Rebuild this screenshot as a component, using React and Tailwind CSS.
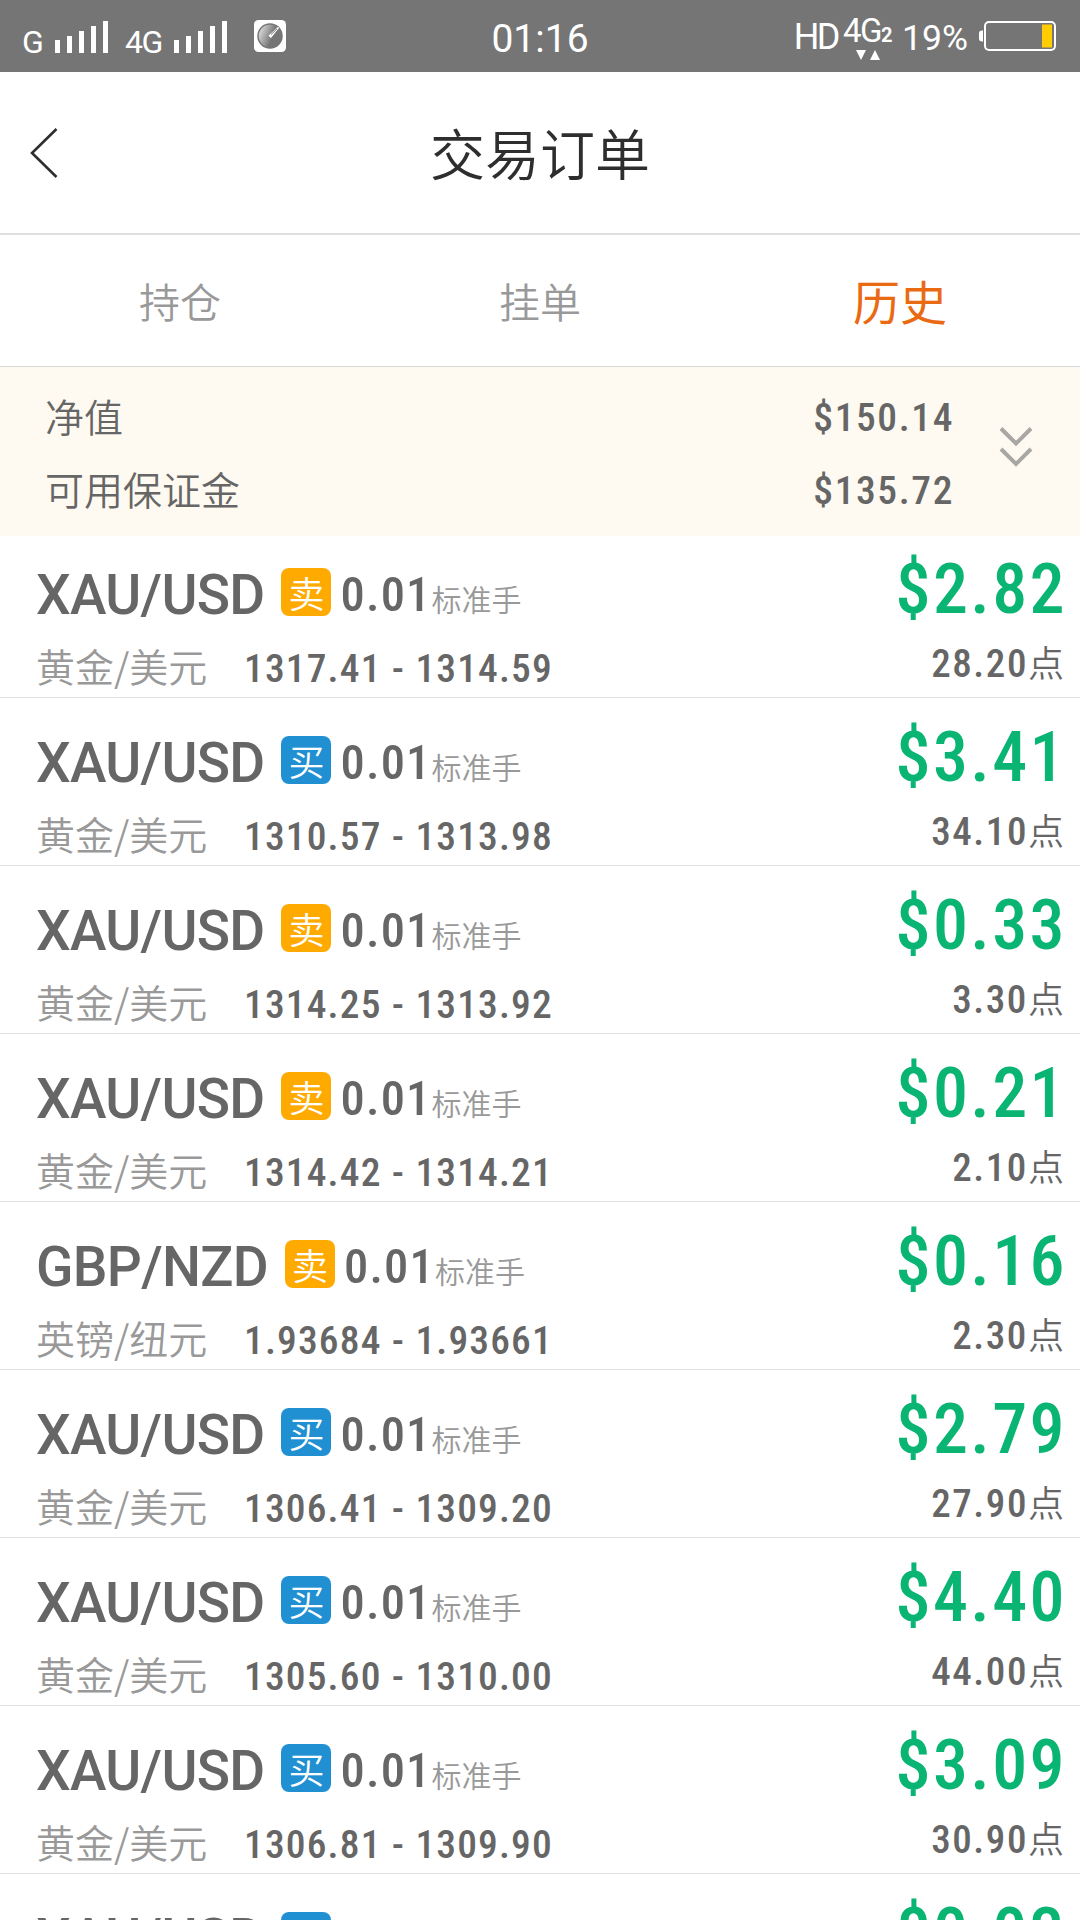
const NUM = "font-['Roboto_Condensed','Noto_Sans_CJK_SC',sans-serif] font-medium";

const orders = [
  { symbol: "XAU/USD", name: "黄金/美元", side: "sell", from: "1317.41", to: "1314.59", profit: "$2.82", points: "28.20" },
  { symbol: "XAU/USD", name: "黄金/美元", side: "buy", from: "1310.57", to: "1313.98", profit: "$3.41", points: "34.10" },
  { symbol: "XAU/USD", name: "黄金/美元", side: "sell", from: "1314.25", to: "1313.92", profit: "$0.33", points: "3.30" },
  { symbol: "XAU/USD", name: "黄金/美元", side: "sell", from: "1314.42", to: "1314.21", profit: "$0.21", points: "2.10" },
  { symbol: "GBP/NZD", name: "英镑/纽元", side: "sell", from: "1.93684", to: "1.93661", profit: "$0.16", points: "2.30" },
  { symbol: "XAU/USD", name: "黄金/美元", side: "buy", from: "1306.41", to: "1309.20", profit: "$2.79", points: "27.90" },
  { symbol: "XAU/USD", name: "黄金/美元", side: "buy", from: "1305.60", to: "1310.00", profit: "$4.40", points: "44.00" },
  { symbol: "XAU/USD", name: "黄金/美元", side: "buy", from: "1306.81", to: "1309.90", profit: "$3.09", points: "30.90" },
  { symbol: "XAU/USD", name: "黄金/美元", side: "buy", from: "1306.40", to: "1306.43", profit: "$0.03", points: "0.30" },
];

const tabs = [
  { label: "持仓", active: false },
  { label: "挂单", active: false },
  { label: "历史", active: true },
];

function SignalBars() {
  return (
    <div className="flex items-end gap-[7px]">
      <span className="h-[13px] w-[5px] bg-white" />
      <span className="h-[17px] w-[5px] bg-white" />
      <span className="h-[22px] w-[5px] bg-white" />
      <span className="h-[27px] w-[5px] bg-white" />
      <span className="h-[32px] w-[5px] bg-white" />
    </div>
  );
}

function GaugeIcon() {
  return (
    <svg width="32" height="32" viewBox="0 0 32 32">
      <defs>
        <linearGradient id="dial" x1="0" y1="0.3" x2="1" y2="0.7">
          <stop offset="0" stopColor="#e0e0e0" />
          <stop offset="0.6" stopColor="#757575" />
        </linearGradient>
      </defs>
      <rect width="32" height="32" rx="4.5" fill="#fff" />
      <circle cx="16" cy="16" r="12" fill="url(#dial)" stroke="#757575" strokeWidth="1.5" />
      <path d="M13.8 15.6 L24 6.4 L25.6 7.8 L17 18.6 Z" fill="#fff" stroke="#757575" strokeWidth="0.8" />
      <path d="M17 14.6 L23 8.8" stroke="#757575" strokeWidth="1" />
    </svg>
  );
}

function StatusBar() {
  return (
    <div className="flex h-[72px] items-start justify-between bg-[#757575] font-['Roboto',sans-serif] font-normal text-white">
      <div className="flex h-[53px] w-[420px] items-end pl-[22px]">
        <span className="w-[33px] text-[32px] leading-[22px]">G</span>
        <SignalBars />
        <span className="ml-[17px] w-[49px] text-[32px] leading-[22px] tracking-[-1.5px]">4G</span>
        <SignalBars />
        <span className="mb-px ml-[27px]"><GaugeIcon /></span>
      </div>
      <span className="w-[120px] pt-5 text-center text-[39px] leading-[39px]">01:16</span>
      <div className="flex h-[72px] w-[420px] items-start justify-end pr-6">
        <span className="mt-[19px] text-[36px] leading-9 tracking-[-2.5px]">HD</span>
        <div className="ml-[5px] flex w-[55px] flex-col pt-4">
          <div className="flex items-baseline">
            <span className="text-[33px] leading-[30px] tracking-[-1.5px]">4G</span>
            <span className="text-[20px] leading-[30px] font-bold">2</span>
          </div>
          <svg className="-mt-px ml-[13px]" width="24" height="11" viewBox="0 0 24 11" fill="#fff">
            <path d="M0 1h10L5 11z" />
            <path d="M14 11h10L19 1z" />
          </svg>
        </div>
        <span className="ml-1 mt-5 w-[77px] text-[35.5px] leading-9">19%</span>
        <svg className="mt-[21px]" width="77" height="30" viewBox="0 0 77 30">
          <path d="M4 9.5h-1a3 3 0 0 0-3 3v5a3 3 0 0 0 3 3h1z" fill="#fff" />
          <rect x="6" y="1" width="70" height="28" rx="4" fill="none" stroke="#fff" strokeWidth="2" />
          <rect x="63" y="3.5" width="10" height="23" fill="#fc0" />
        </svg>
      </div>
    </div>
  );
}

function Header() {
  return (
    <header className="grid h-[163px] grid-cols-[200px_1fr_200px] items-center border-b-2 border-[#dedede]">
      <svg className="ml-[30px]" width="28" height="50" viewBox="0 0 28 50" fill="none" stroke="#2e2e2e" strokeWidth="2.6">
        <path d="M26.5 1 L2 25 L26.5 49" />
      </svg>
      <h1 className="-mt-0.5 text-center text-[55px] text-[#2e2e2e]">交易订单</h1>
    </header>
  );
}

function Tabs() {
  return (
    <nav className="grid h-[132px] grid-cols-3 items-center border-b border-[#d8d8d8] text-center">
      {tabs.map((tab) => (
        <span key={tab.label} className={tab.active ? "text-[47px] font-normal text-[#ea6a14]" : "text-[41px] text-[#999]"}>
          {tab.label}
        </span>
      ))}
    </nav>
  );
}

function Summary() {
  return (
    <section className="flex h-[169px] bg-[#fffaf1] pl-[45px] pr-[47px] text-[#666]">
      <div className="flex-1 pt-3 text-[39px] leading-[73px]">
        <p>净值</p>
        <p>可用保证金</p>
      </div>
      <div className={`${NUM} pt-[14px] text-right text-[39.5px] leading-[73px] tracking-[1.6px]`}>
        <p>$150.14</p>
        <p>$135.72</p>
      </div>
      <svg className="ml-[45px] mt-[59px]" width="34" height="42" viewBox="0 0 34 42" fill="none" stroke="#a9a7a3" strokeWidth="4">
        <path d="M2 2.5 L17 17.5 L32 2.5" />
        <path d="M2 23 L17 38 L32 23" />
      </svg>
    </section>
  );
}

function OrderRow({ order }) {
  const sell = order.side === "sell";
  return (
    <li className="flex h-[168px] shrink-0 justify-between border-b border-[#e2e2e2] pl-9 pr-4">
      <div>
        <div className="flex h-[107px] items-start pt-[25px]">
          <span className="font-['Roboto',sans-serif] text-[55px] leading-[80px] font-medium tracking-[-0.7px] text-[#666]">{order.symbol}</span>
          <span className={`ml-[17px] mt-[13px] flex h-12 w-[50px] items-center justify-center rounded-lg text-[36px] text-white ${sell ? "bg-[#ffaa00]" : "bg-[#2090d2]"}`}>
            {sell ? "卖" : "买"}
          </span>
          <div className="ml-[9px] flex items-baseline pt-[5px]">
            <span className={`${NUM} w-[91px] text-[48.5px] leading-[70px] tracking-[1.2px] text-[#666]`}>0.01</span>
            <span className="text-[30px] leading-[40px] text-[#999]">标准手</span>
          </div>
        </div>
        <div className="flex items-baseline">
          <span className="w-[208px] text-[39px] leading-[56px] text-[#999]">{order.name}</span>
          <span className={`${NUM} text-[39.5px] leading-[56px] tracking-[1.15px] text-[#666]`}>
            {order.from} - {order.to}
          </span>
        </div>
      </div>
      <div className="text-right">
        <p className={`${NUM} -mr-[3px] pt-[19px] text-[70px] leading-[80px] tracking-[2.4px] text-[#0ab573]`}>{order.profit}</p>
        <p className="flex items-baseline justify-end pt-1 text-[#666]">
          <span className={`${NUM} text-[39px] leading-[56px] tracking-[1.6px]`}>{order.points}</span>
          <span className="text-[36px] leading-[56px]">点</span>
        </p>
      </div>
    </li>
  );
}

export default function App() {
  return (
    <div className="flex h-[1920px] w-[1080px] flex-col overflow-hidden bg-white font-['Noto_Sans_CJK_SC',sans-serif] font-[350]">
      <StatusBar />
      <Header />
      <Tabs />
      <Summary />
      <div className="min-h-0 flex-1 overflow-hidden">
        <ul className="-mt-1.5 flex flex-col">
          {orders.map((order, i) => (
            <OrderRow key={i} order={order} />
          ))}
        </ul>
      </div>
    </div>
  );
}
